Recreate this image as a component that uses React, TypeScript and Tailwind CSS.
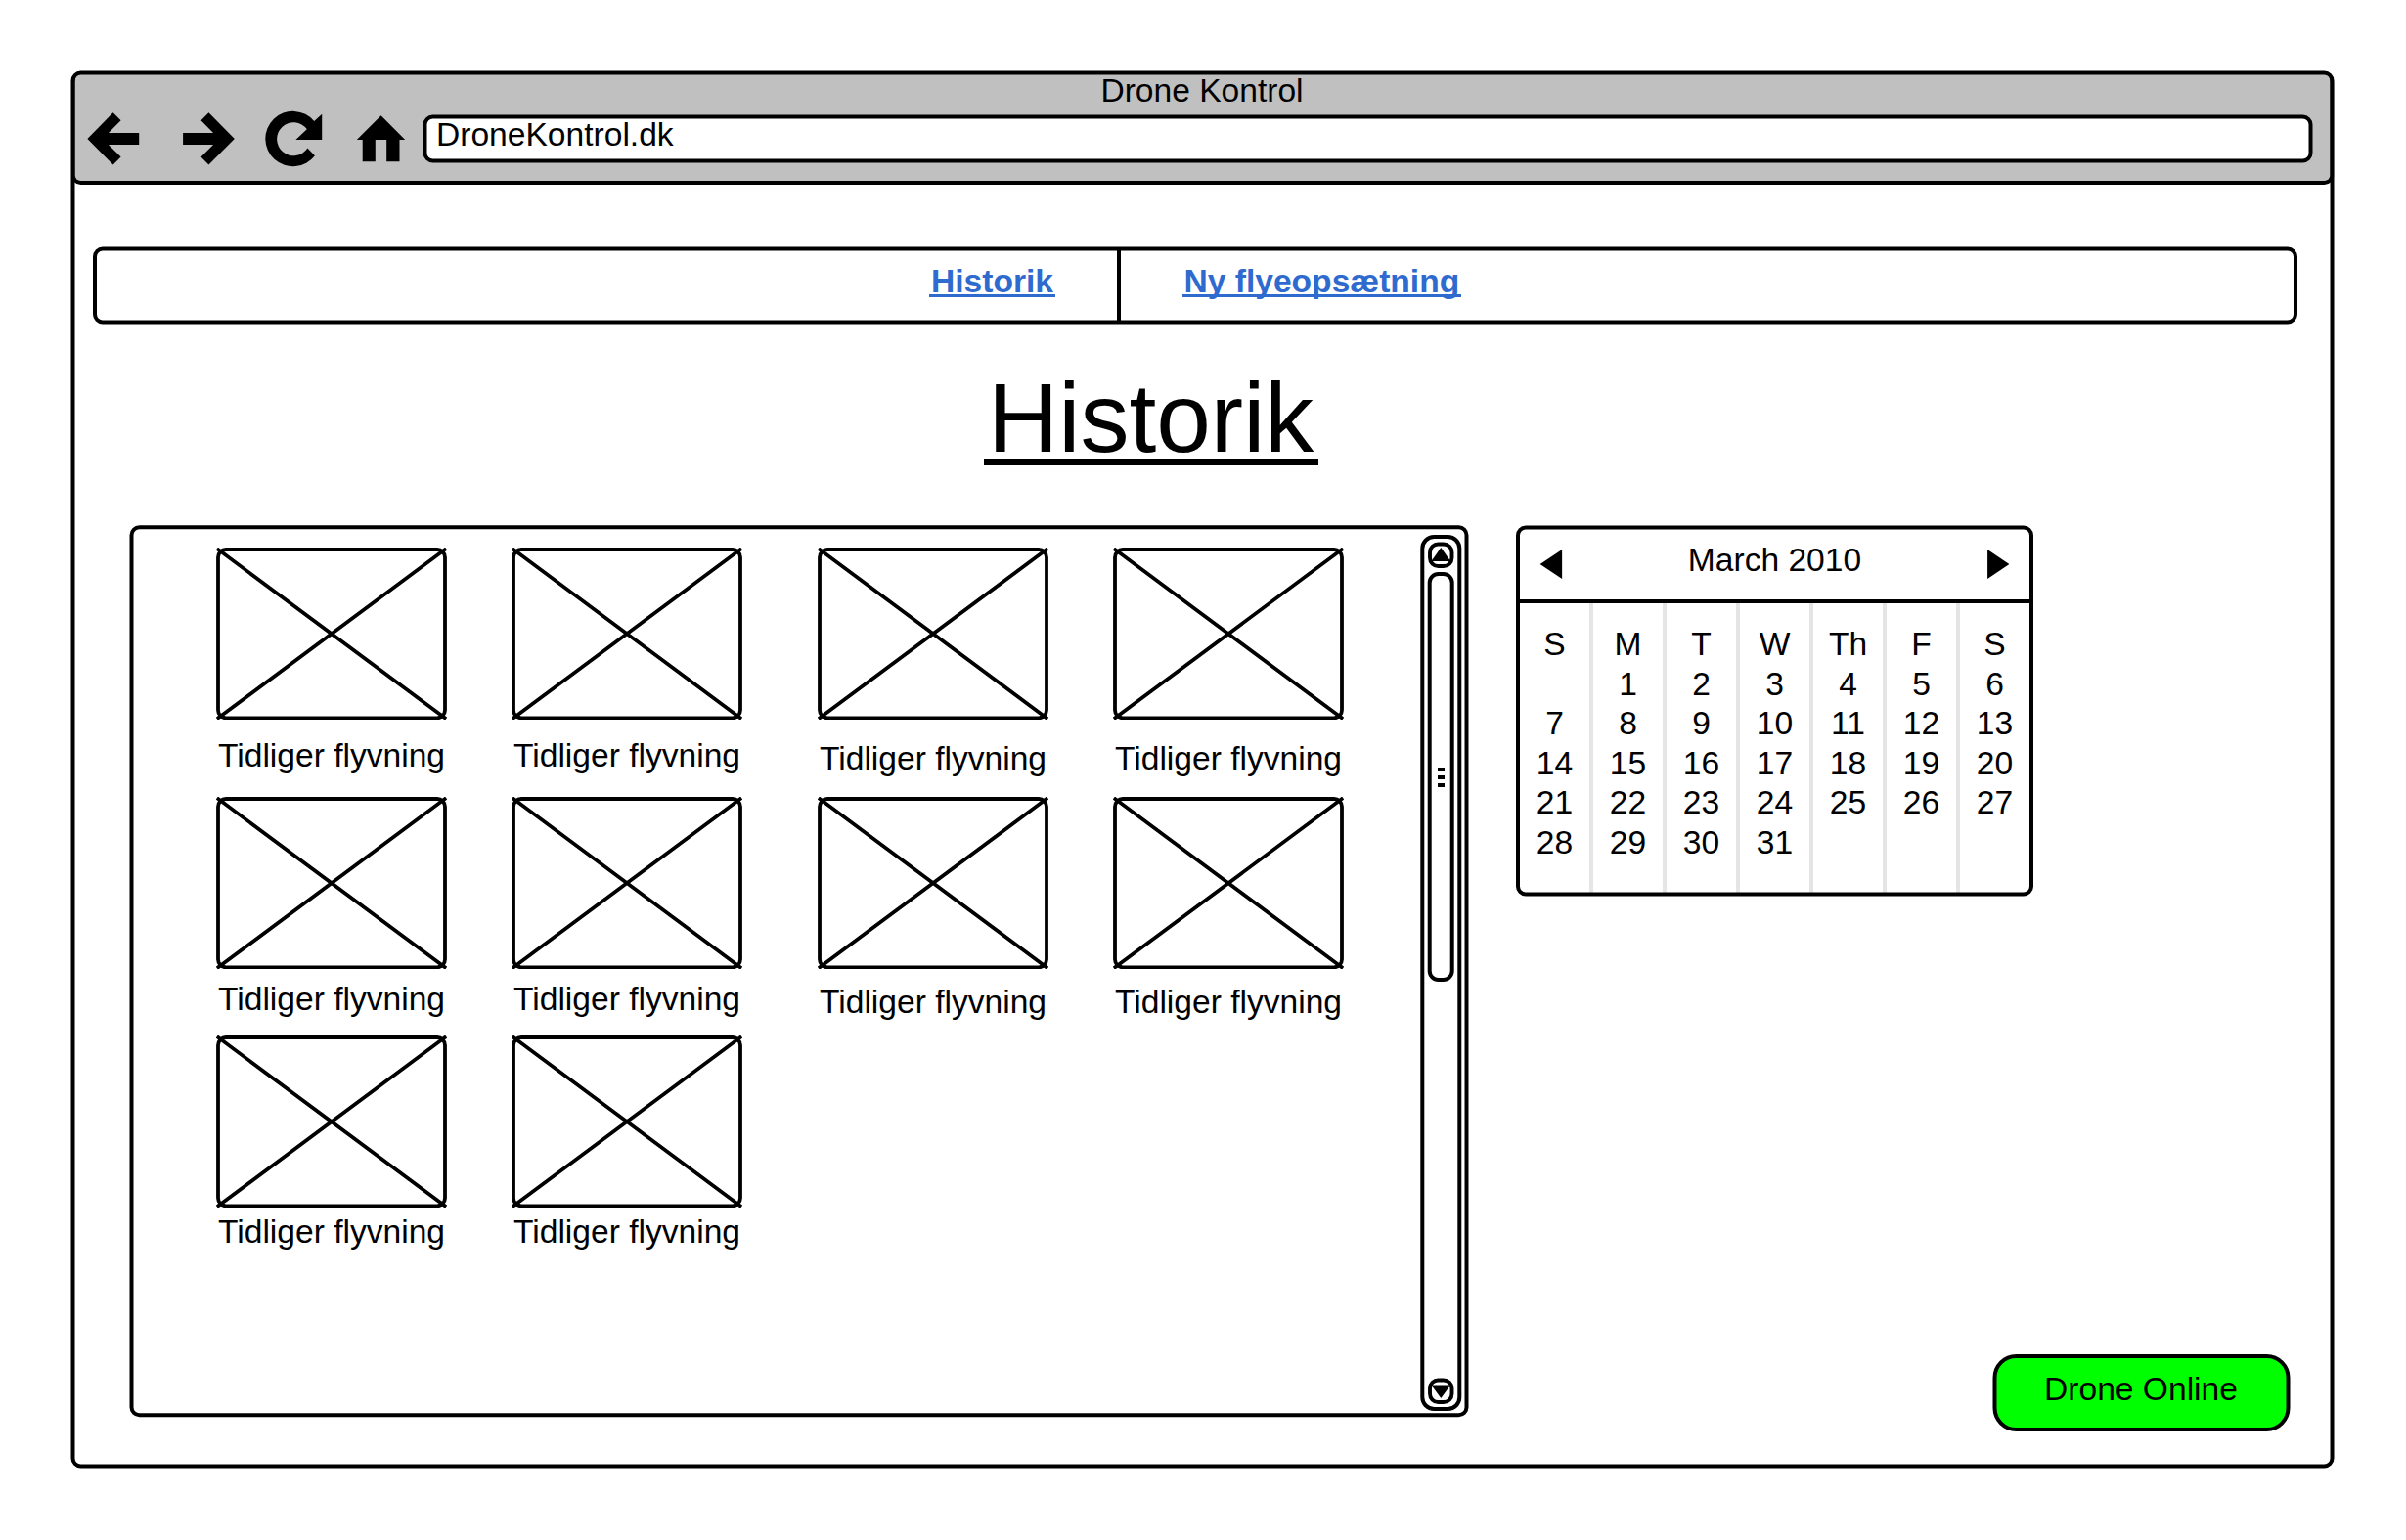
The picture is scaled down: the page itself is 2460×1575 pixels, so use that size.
import React from "react";

/** Outline drawn over a panel; half-pixel shifts are passed in by the caller. */
function Frame({ className = "" }: { className?: string }) {
  return (
    <span
      aria-hidden
      className={`pointer-events-none absolute inset-0 border-4 border-black ${className}`}
    />
  );
}

function BackIcon() {
  return (
    <svg className="h-[59px] w-[54px] shrink-0" viewBox="89 112 54 59">
      <path d="M89.4 142 115.6 115.3 123.6 123.3 110.9 136H142.2V148H110.9L123.6 160.4 115.6 168.4Z" />
    </svg>
  );
}

function ForwardIcon() {
  return (
    <svg className="ml-[44px] h-[59px] w-[53px] shrink-0" viewBox="187 112 53 59">
      <path d="M239.8 142 213.4 115.3 205.5 123.3 218.1 136H187.1V148H218.1L205.5 160.4 213.4 168.4Z" />
    </svg>
  );
}

function ReloadIcon() {
  return (
    <svg className="ml-[30px] h-[59px] w-[60px] shrink-0" viewBox="270 112 60 59">
      <path d="M321.9 159.2A28.2 28.2 0 1 1 321.2 124L329.2 116.7V143H302.4L313.8 132.2A17 17 0 1 0 314.4 151.5Z" />
    </svg>
  );
}

function HomeIcon() {
  return (
    <svg className="ml-[34px] h-[59px] w-[51px] shrink-0" viewBox="364 112 51 59">
      <path d="M389.6 118.2 414.2 143H408.5V165.3H395.2V143H383.8V165.3H370.7V143H364.8Z" />
    </svg>
  );
}

function Toolbar() {
  return (
    <header className="relative h-[117px]">
      <div className="absolute inset-x-0 bottom-0 top-[2px] translate-x-[0.5px] rounded-[10px] border-x-4 border-b-4 border-black bg-[#c0c0c0]" />
      <div className="relative flex h-full flex-col">
        <div className="h-[45px] text-center leading-[42px]">Drone Kontrol</div>
        <div className="flex h-[49px] items-center pl-[17px]">
          <BackIcon />
          <ForwardIcon />
          <ReloadIcon />
          <HomeIcon />
          <div className="relative ml-[17px] h-[49px] w-[1932px]">
            <Frame className="translate-x-[0.5px] translate-y-[0.5px] rounded-[10px] bg-white" />
            <div className="relative pl-[14px] leading-[42px]">DroneKontrol.dk</div>
          </div>
        </div>
      </div>
    </header>
  );
}

function NavLink({ children }: { children: React.ReactNode }) {
  return (
    <a className="relative mt-[16px] h-[40px] font-bold leading-[40px] text-[#2f6bcf] after:absolute after:-inset-x-[2px] after:top-[33px] after:h-[3px] after:bg-[#2f6bcf]">
      {children}
    </a>
  );
}

function NavBar() {
  return (
    <nav className="relative ml-[23px] mt-[63px] flex h-[79px] w-[2254px]">
      <Frame className="translate-y-[0.5px] rounded-[10px]" />
      <div className="flex w-[1047px] justify-end pr-[65px]">
        <NavLink>Historik</NavLink>
      </div>
      <div className="mb-[3px] mt-1 w-1 bg-black" />
      <div className="flex pl-[64.5px]">
        <NavLink>Ny flyeopsætning</NavLink>
      </div>
    </nav>
  );
}

function Placeholder() {
  return (
    <svg className="block h-[176px] w-[236px]" viewBox="0 0 236 176" fill="none" stroke="#000" strokeWidth="3.8">
      <rect x="2" y="2" width="232" height="172.3" rx="8" />
      <path d="M.8 1.1 235.2 175.2M235.2 1.1 .8 175.2" />
    </svg>
  );
}

const leftRows = ["mt-[17px]", "mt-[11px]", "mt-[5px]"];
const rightRows = ["mt-[20px]", "mt-[14px]"];
const rowHeights = ["h-[255px]", "h-[244px]", "h-[244px]"];

const columns = [
  { className: "", captions: leftRows },
  { className: "ml-[66px]", captions: leftRows },
  { className: "ml-[77px]", captions: rightRows },
  { className: "ml-[66px]", captions: rightRows },
];

function ScrollButton({ down = false, className = "" }: { down?: boolean; className?: string }) {
  return (
    <svg className={`block h-[28px] w-[28px] shrink-0 ${className}`} viewBox="0 0 28 28">
      <rect x="2" y="2.5" width="22.5" height="22.5" rx="8.5" fill="#fff" stroke="#000" strokeWidth="3.9" />
      <path d={down ? "M3.4 7.5H23.2L13.3 21Z" : "M3.4 20H23.2L13.3 6Z"} />
    </svg>
  );
}

function ScrollBar() {
  return (
    <div className="relative ml-auto mr-[7px] mt-[10px] flex h-[896px] w-[42px] flex-col pl-2">
      <Frame className="translate-x-[0.3px] rounded-[14px]" />
      <ScrollButton className="mt-[7px]" />
      <div className="relative mt-[3px] flex h-[419px] w-[27px] flex-col items-center gap-1 pt-[200px]">
        <Frame className="-translate-x-[0.3px] rounded-[11px]" />
        <span className="h-1 w-[7px] bg-black" />
        <span className="h-1 w-[7px] bg-black" />
        <span className="h-1 w-[7px] bg-black" />
      </div>
      <ScrollButton down className="mb-[6px] mt-auto" />
    </div>
  );
}

function History() {
  return (
    <section className="relative flex h-[912px] w-[1369px] pl-[89px]">
      <Frame className="translate-x-[0.5px] translate-y-[0.3px] rounded-[10px]" />
      {columns.map((column, i) => (
        <div key={i} className={`flex w-[236px] flex-col pt-[23px] ${column.className}`}>
          {column.captions.map((margin, row) => (
            <figure key={row} className={rowHeights[row]}>
              <Placeholder />
              <figcaption className={`whitespace-nowrap text-center leading-[40px] ${margin}`}>
                Tidliger flyvning
              </figcaption>
            </figure>
          ))}
        </div>
      ))}
      <ScrollBar />
    </section>
  );
}

const days = [
  ["S", "", "7", "14", "21", "28"],
  ["M", "1", "8", "15", "22", "29"],
  ["T", "2", "9", "16", "23", "30"],
  ["W", "3", "10", "17", "24", "31"],
  ["Th", "4", "11", "18", "25", ""],
  ["F", "5", "12", "19", "26", ""],
  ["S", "6", "13", "20", "27", ""],
];

function Calendar() {
  return (
    <section className="relative h-[379px] w-[529px]">
      <div className="flex h-[80px] items-start justify-between border-b-4 border-black px-[24px]">
        <svg className="mt-[25px] h-[30px] w-[24px]" viewBox="0 0 24 30">
          <path d="M.6 15 23.1 0V30Z" />
        </svg>
        <div className="mt-[16px] leading-[40px]">March 2010</div>
        <svg className="mt-[25px] h-[30px] w-[24px]" viewBox="0 0 24 30">
          <path d="M23.4 15 1.1 0V30Z" />
        </svg>
      </div>
      <div className="flex h-[297px] pl-1">
        {days.map((column, i) => (
          <div
            key={i}
            className="flex w-[75px] flex-col border-l-4 border-[#e5e5e5] pt-[22px] text-center first:w-[71px] first:border-l-0"
          >
            {column.map((day, j) => (
              <div key={j} className="h-[40.55px] leading-[40.55px]">
                {day}
              </div>
            ))}
          </div>
        ))}
      </div>
      <Frame className="translate-y-[0.5px] rounded-[10px]" />
    </section>
  );
}

export default function App() {
  return (
    <div className="h-[1575px] w-[2460px] overflow-hidden bg-white p-[72px] font-['Liberation_Sans',Arial,sans-serif] text-[33.6px] text-black">
      <div className="relative h-[1429px] w-[2314px]">
        <Toolbar />
        <Frame className="translate-x-[0.5px] translate-y-[0.5px] rounded-[10px]" />
        <NavBar />
        <h1 className="relative ml-[938px] mt-[46px] h-[100px] w-fit text-[100px] leading-[100px] after:absolute after:-inset-x-[4.5px] after:top-[92px] after:h-[7px] after:bg-black">
          Historik
        </h1>
        <main className="mt-[60px] flex h-[964px] pl-[60px]">
          <History />
          <div className="ml-[49px] flex flex-1 flex-col justify-between pb-[37px] pr-[45px]">
            <Calendar />
            <button className="relative h-[79px] w-[304px] self-end">
              <Frame className="translate-x-[0.5px] rounded-[24px] bg-[#00ff00]" />
              <span className="relative -top-[4px] block leading-[40px]">Drone Online</span>
            </button>
          </div>
        </main>
      </div>
    </div>
  );
}
